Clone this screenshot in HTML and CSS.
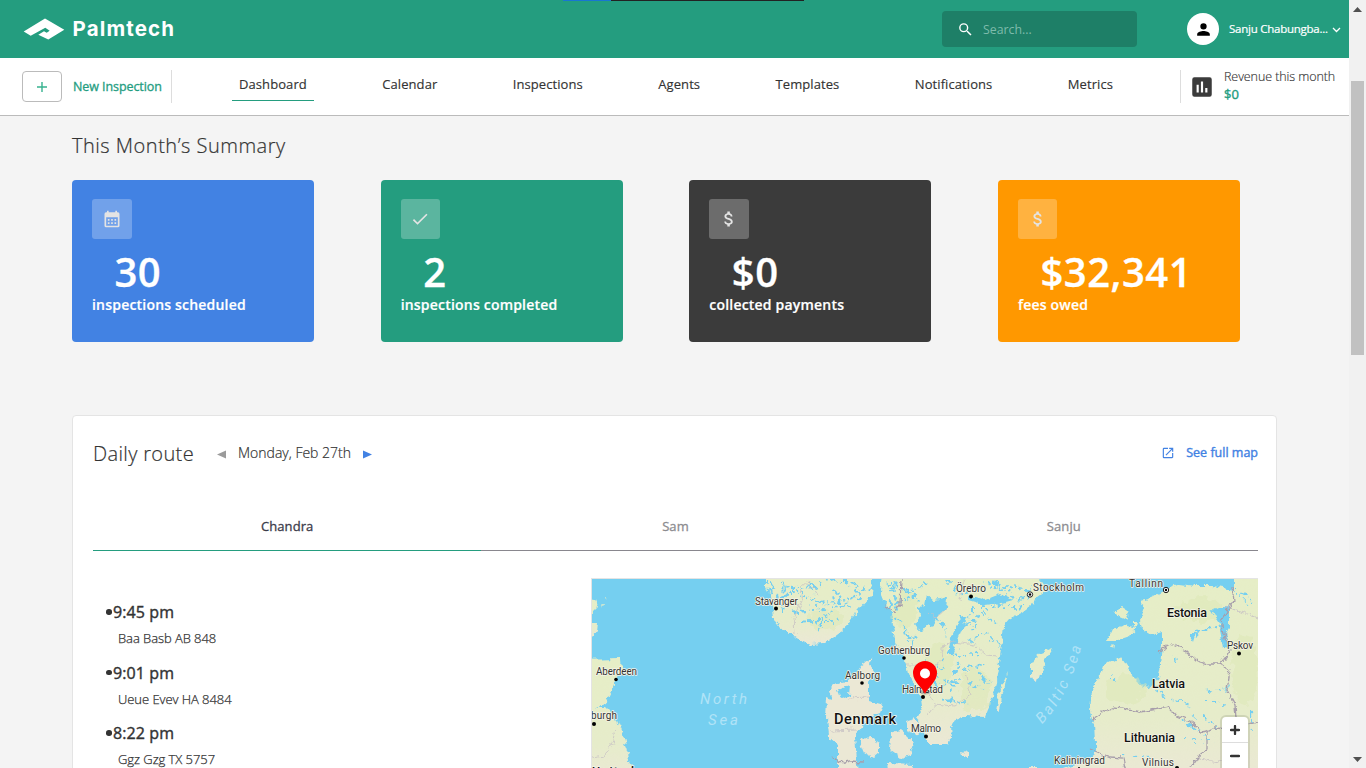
FILE: index.html
```html
<!DOCTYPE html>
<html lang="en">
<head>
<meta charset="utf-8">
<title>Palmtech Dashboard</title>
<link rel="stylesheet" href="styles.css">
</head>
<body>
<div class="window">
<div class="page">
  <header class="topbar">
    <div class="loader"></div>
    <svg class="logo-mark" width="42" height="23" viewBox="0 0 42 23"><path fill="#fff" d="M.7 13.500 22 .5 41.300 11.800 25.300 21.500 15.300 16.800 21 13.200 23.700 14.800 26.700 12.800 22.300 9.800 7.700 17.800Z"/></svg>
    <span class="brand">Palmtech</span>
    <div class="search">
      <svg width="17" height="17" viewBox="0 0 24 24"><path fill="#fff" d="M15.500 14h-.79l-.28-.27A6.470 6.470 0 0 0 16 9.500 6.500 6.500 0 1 0 9.500 16c1.610 0 3.090-.59 4.230-1.570l.27.28v.79l5 4.990L20.490 19zm-6 0a4.500 4.500 0 1 1 0-9 4.500 4.500 0 0 1 0 9"/></svg>
      <span>Search...</span>
    </div>
    <div class="avatar"><svg width="19" height="19" viewBox="0 0 24 24"><path d="M12 12a4 4 0 1 0 0-8 4 4 0 0 0 0 8m0 2c-2.670 0-8 1.340-8 4v2h16v-2c0-2.660-5.330-4-8-4"/></svg></div>
    <span class="user">Sanju Chabungba...</span>
    <svg class="chevron" width="9" height="6" viewBox="0 0 9 6"><path d="M1 1l3.500 3.500L8 1" fill="none" stroke="#fff" stroke-width="1.300"/></svg>
  </header>
  <nav class="nav">
    <div class="new-button"><svg width="10" height="10" viewBox="0 0 10 10"><path d="M5 0v10M0 5h10" stroke="#37b28f" stroke-width="1.400"/></svg></div>
    <span class="new-label">New Inspection</span>
    <div class="links">
      <a class="link active">Dashboard</a><a class="link">Calendar</a><a class="link">Inspections</a><a class="link">Agents</a><a class="link">Templates</a><a class="link">Notifications</a><a class="link">Metrics</a>
    </div>
    <div class="revenue">
      <svg width="26" height="26" viewBox="0 0 24 24"><path fill="#3b3b3b" d="M19 3H5a2 2 0 0 0-2 2v14a2 2 0 0 0 2 2h14a2 2 0 0 0 2-2V5a2 2 0 0 0-2-2M9 17H7v-7h2zm4 0h-2V7h2zm4 0h-2v-4h2z"/></svg>
      <div class="rev-text"><div class="rev-title">Revenue this month</div><div class="rev-value">$0</div></div>
    </div>
  </nav>
  <main class="content">
    <h1 class="title">This Month’s Summary</h1>
    <section class="cards">
      <article class="card blue">
        <div class="card-icon"><svg width="20" height="20" viewBox="0 0 24 24"><path fill="#e4e4e4" fill-rule="evenodd" d="M19 4h-1V2h-2v2H8V2H6v2H5a2 2 0 0 0-2 2v14a2 2 0 0 0 2 2h14a2 2 0 0 0 2-2V6a2 2 0 0 0-2-2m0 16H5V10h14zM7 12h2v2H7zm4 0h2v2h-2zm4 0h2v2h-2zM7 16h2v2H7zm4 0h2v2h-2zm4 0h2v2h-2z"/></svg></div>
        <div class="number">30</div><div class="label">inspections scheduled</div>
      </article>
      <article class="card green">
        <div class="card-icon"><svg width="20" height="20" viewBox="0 0 24 24"><path fill="#e4e4e4" d="M9 16.170 4.830 12l-1.420 1.410L9 19 21 7l-1.410-1.410z"/></svg></div>
        <div class="number">2</div><div class="label">inspections completed</div>
      </article>
      <article class="card dark">
        <div class="card-icon"><svg width="20" height="20" viewBox="0 0 24 24"><path fill="#e4e4e4" d="M11.800 10.900c-2.270-.59-3-1.200-3-2.150 0-1.090 1.010-1.850 2.700-1.850 1.780 0 2.440.85 2.500 2.100h2.210c-.07-1.720-1.120-3.300-3.210-3.810V3h-3v2.160c-1.940.42-3.500 1.680-3.500 3.610 0 2.310 1.910 3.460 4.700 4.130 2.500.6 3 1.480 3 2.410 0 .69-.49 1.790-2.700 1.790-2.060 0-2.870-.92-2.980-2.100h-2.200c.12 2.190 1.760 3.420 3.680 3.830V21h3v-2.150c1.950-.37 3.500-1.500 3.500-3.550 0-2.840-2.430-3.810-4.700-4.400"/></svg></div>
        <div class="number">$0</div><div class="label">collected payments</div>
      </article>
      <article class="card orange">
        <div class="card-icon"><svg width="20" height="20" viewBox="0 0 24 24"><path fill="#e4e4e4" d="M11.800 10.900c-2.270-.59-3-1.200-3-2.150 0-1.090 1.010-1.850 2.700-1.850 1.780 0 2.440.85 2.500 2.100h2.210c-.07-1.720-1.120-3.300-3.210-3.810V3h-3v2.160c-1.940.42-3.500 1.680-3.500 3.610 0 2.310 1.910 3.460 4.700 4.130 2.500.6 3 1.480 3 2.410 0 .69-.49 1.790-2.700 1.790-2.060 0-2.870-.92-2.980-2.100h-2.200c.12 2.190 1.760 3.420 3.680 3.830V21h3v-2.150c1.950-.37 3.500-1.500 3.500-3.550 0-2.840-2.430-3.810-4.700-4.400"/></svg></div>
        <div class="number">$32,341</div><div class="label">fees owed</div>
      </article>
    </section>
    <section class="panel">
      <div class="panel-head">
        <h2 class="panel-title">Daily route</h2>
        <svg class="prev" width="9" height="9" viewBox="0 0 9 9"><path d="M9 .5v8L0 4.500Z" fill="#9b9b9b"/></svg>
        <span class="date">Monday, Feb 27th</span>
        <svg width="9" height="9" viewBox="0 0 9 9"><path d="M0 .5v8L9 4.500Z" fill="#4282e3"/></svg>
        <a class="full-map"><svg width="14" height="14" viewBox="0 0 24 24"><path fill="#4282e3" d="M19 19H5V5h7V3H5a2 2 0 0 0-2 2v14a2 2 0 0 0 2 2h14c1.100 0 2-.9 2-2v-7h-2zM14 3v2h3.590l-9.830 9.830 1.410 1.410L19 6.410V10h2V3z"/></svg><span>See full map</span></a>
      </div>
      <div class="tabs"><div class="tab selected">Chandra</div><div class="tab">Sam</div><div class="tab">Sanju</div></div>
      <div class="route">
        <div class="stops">
          <div class="stop"><div class="time"><i class="dot"></i>9:45 pm</div><div class="address">Baa Basb AB 848</div></div>
          <div class="stop"><div class="time"><i class="dot"></i>9:01 pm</div><div class="address">Ueue Evev HA 8484</div></div>
          <div class="stop"><div class="time"><i class="dot"></i>8:22 pm</div><div class="address">Ggz Gzg TX 5757</div></div>
        </div>
        <div class="map">
          <svg width="666" height="189" viewBox="592 579 666 189">
            <defs>
              <filter id="coast" filterUnits="userSpaceOnUse" x="572" y="559" width="706" height="229"><feTurbulence type="fractalNoise" baseFrequency="0.16" numOctaves="3" seed="4"/><feDisplacementMap in="SourceGraphic" scale="7" xChannelSelector="R" yChannelSelector="G"/></filter>
              <filter id="rough" filterUnits="userSpaceOnUse" x="572" y="559" width="706" height="229"><feTurbulence type="fractalNoise" baseFrequency="0.14" numOctaves="2" seed="9"/><feDisplacementMap in="SourceGraphic" scale="14" xChannelSelector="R" yChannelSelector="G"/></filter>
              <linearGradient id="soil" x1="0" y1="0" x2="0" y2="1"><stop offset="0" stop-color="#e6eec6"/><stop offset=".7" stop-color="#e6ecca"/><stop offset="1" stop-color="#ebe8d5"/></linearGradient>
              <path id="baltic" d="M1042 724Q1070 696 1083 640"/>
            </defs>
            <rect x="580" y="570" width="690" height="210" fill="#75cff0"/>
            <g filter="url(#coast)" fill="url(#soil)">
              <path d="M766 565V587L771 600 773 610 774 620 780 628 790 634 800 640 810 644 825 643 840 632 848 625 858 610 872 595 874 565Z"/>
              <path d="M883 565 880 590 886 605 892 613 893 625 895 640 900 652 906 664 908 674 916 686 922 700 923 707 917 717 920 726 926 740 930 744 948 744 951 738 950 728 955 720 965 716 985 717 990 705 995 688 998 668 1001 650 1003 635 1004 625 1009 619 1022 612 1031 605 1037 597 1047 590 1040 580 1040 565Z"/>
              <path d="M1008 672 1004 690 998 713 995 711 999 690Z"/>
              <path d="M1031 665 1038 654 1053 648 1045 661 1041 677 1034 682 1031 676Z"/>
              <path fill="#ebe8d5" fill-rule="evenodd" d="M874 657 870 663 873 672 869 682 869 701 883 705 880 713 867 718 860 729 855 736 857 762 858 780H838L838 745 828 736 826 718 827 698 832 700 829 690 836 683 847 681 857 673 862 665ZM837 690 850 685 849 695 840 698Z"/>
              <path fill="#ebe8d5" d="M859 741 869 737 879 743 879 753 873 758 864 753ZM891 733 900 730 907 736 914 742 910 755 901 758 890 750ZM906 721 915 718 919 727 917 737 909 732ZM887 763 915 764 905 772 888 770ZM961 750 969 753 969 758 962 756Z"/>
              <path d="M580 660 621 659 622 669 616 680 612 690 606 703 596 708H606L616 718 624 738 628 755 634 780H580Z"/>
              <path d="M585 622 597 622 596 632 592 637 585 640ZM585 598 594 600 597 608 592 613 585 612ZM601 604 604 603 603 607ZM606 596 608 597 607 600Z"/>
              <path d="M1234 565V590L1212 586 1195 586 1180 584 1165 590 1152 597 1141 600 1144 608 1140 620 1144 630 1152 635 1162 632 1162 645 1160 665 1158 677 1150 688 1143 687 1134 678 1128 668 1121 657 1108 663 1103 665 1098 680 1092 690 1090 712 1094 724 1095 743 1095 754 1088 760 1060 770V780H1280V565Z"/>
              <path d="M1108 640 1113 629 1125 625 1137 628 1130 636 1115 641ZM1113 611 1122 607 1130 612 1125 619 1118 616ZM1133 622 1138 622 1137 627 1133 626ZM1112 646 1115 645 1114 649ZM580 765H604V768H580ZM1028 766H1037V772H1028Z"/>
            </g>
            <g fill="#dde8b4" opacity=".45" filter="url(#rough)"><ellipse cx="975" cy="690" rx="16" ry="22"/><ellipse cx="938" cy="665" rx="15" ry="22"/><ellipse cx="905" cy="610" rx="12" ry="20"/><ellipse cx="1200" cy="610" rx="24" ry="12"/><ellipse cx="1125" cy="690" rx="20" ry="14"/><ellipse cx="1245" cy="670" rx="13" ry="35"/><ellipse cx="825" cy="620" rx="18" ry="10"/></g>
            <g filter="url(#coast)" fill="#75cff0">
              <path d="M927 594 934 600 948 597 947 608 938 615 933 625 918 631 914 625 920 617 919 607 925 606ZM961 615 966 618 960 635 952 654 948 654 951 638ZM1211 611 1219 607 1229 607 1229 628 1225 634 1230 649 1224 648 1220 625ZM1190 632 1196 632 1193 642 1190 637ZM968 595 985 600 1000 594 1013 600 1002 603 985 605 968 600Z"/>
            </g>
            <g class="lakes" filter="url(#rough)">
              <path class="dense" d="M766 582 800 590 835 579 870 590M768 592 782 585 792 600M775 600 795 592 820 604 862 596M795 612 845 606M802 622 840 620M772 590 785 612M808 582 815 600M835 590 850 608M818 630 830 612M855 582 860 600"/>
              <path class="dense" d="M888 582 905 592 930 584M888 605 915 596M899 618 912 646M948 582 960 596 988 584 1030 590M938 618 946 632M966 624 985 614 1000 625M970 642 985 632 998 645M955 654 980 655M962 670 985 664M968 684 985 690M922 662 940 676 930 690M928 688 959 680M942 700 968 703M973 608 1022 606M905 634 918 640M893 588 898 612M912 588 918 606M995 585 1015 598 1030 598M975 630 970 615M958 664 952 692M978 674 990 684M945 660 938 672"/>
              <path d="M1156 690 1174 701 1192 705M1175 656 1176 660M1110 678 1114 680M1197 634 1216 627M1209 691 1230 687M1205 702 1228 706M1183 722 1205 736M1184 739 1215 741M1124 755 1149 757M1195 714 1220 728M1235 590 1254 605M1252 713 1254 735"/>
            </g>
            <g class="borders" filter="url(#coast)">
              <path d="M901 578 900 605 895 612 885 606M832 756 840 763 850 761 863 762M1159 651 1172 644 1185 650 1197 661 1207 664 1220 664 1225 658 1230 650 1224 635 1221 620 1235 600 1233 588M1220 664 1230 670 1227 690 1235 705 1236 718M1091 720 1105 711 1115 707 1140 712 1169 707 1175 715 1192 722 1200 732 1207 731 1215 727 1230 728 1258 721M1207 731 1207 750 1198 757 1190 768M1090 749 1110 757 1124 758 1126 768"/>
              <g class="minor"><path d="M795 635 794 618 803 600 800 588 808 581 817 595M592 758 604 756 613 743 616 730M906 664 920 664 933 670 941 658 944 644 955 642 975 645 986 655 998 656M928 688 934 704 955 706 972 694 965 675M935 704 928 715M945 610 935 618 928 612M848 698 869 697M830 731 857 730M1225 607 1244 612 1258 618M1198 759 1220 762M965 579 960 600"/></g>
            </g>
            <g class="points"><circle cx="776" cy="608.500" r="2"/><circle cx="616" cy="679.500" r="1.800"/><circle cx="594" cy="724" r="2"/><circle cx="904" cy="658" r="1.800"/><circle cx="862" cy="683" r="1.800"/><circle cx="971" cy="596.500" r="2"/><circle cx="923" cy="697" r="2"/><circle cx="926" cy="736.500" r="2"/><circle cx="1239" cy="653.500" r="2"/><circle cx="1177" cy="768" r="2"/><circle cx="1079" cy="768" r="1"/>
              <g class="capital"><circle cx="1030" cy="594.500" r="2.700"/><circle cx="1166" cy="590" r="2.700"/></g><circle cx="1030" cy="594.500" r="1.200"/><circle cx="1166" cy="590" r="1.200"/></g>
            <g class="towns">
              <text x="755" y="604.500" textLength="43">Stavanger</text><text x="596" y="675" textLength="41">Aberdeen</text><text x="591" y="719" textLength="26">burgh</text><text x="956" y="592" textLength="30">Örebro</text><text x="878" y="653.500" textLength="52">Gothenburg</text><text x="845" y="678.500" textLength="35">Aalborg</text><text x="902" y="692.500" textLength="41">Halmstad</text><text x="911" y="732" textLength="30">Malmo</text><text x="1033" y="591" textLength="51">Stockholm</text><text x="1129" y="586.500" textLength="34">Tallinn</text><text x="1227" y="649" textLength="26">Pskov</text><text x="1054" y="764" textLength="51">Kaliningrad</text><text x="1142" y="766" textLength="32">Vilnius</text>
            </g>
            <g class="countries"><text class="big" x="834" y="724" textLength="62">Denmark</text><text x="1167" y="617" textLength="40">Estonia</text><text x="1152" y="687.500" textLength="33">Latvia</text><text x="1124" y="742" textLength="51">Lithuania</text><text x="592" y="776" textLength="42">United</text></g>
            <g class="seas"><text x="700" y="704" textLength="47">North</text><text x="708" y="725" textLength="30">Sea</text><text><textPath href="#baltic" textLength="88">Baltic Sea</textPath></text></g>
            <ellipse cx="925" cy="692" rx="5" ry="2.500" fill="#000" opacity=".22"/>
            <path fill="#f00" d="M925 694c-2-6-12-12-12-21a12 12 0 0 1 24 0c0 9-10 15-12 21Z"/><circle cx="925" cy="673.500" r="5" fill="#fff"/>
          </svg>
          <div class="zoom"><b><svg width="10" height="10" viewBox="0 0 10 10"><path d="M5 1v8M1 5h8" stroke="#333" stroke-width="2.300" stroke-linecap="round"/></svg></b><b><svg width="10" height="10" viewBox="0 0 10 10"><path d="M1 5h8" stroke="#333" stroke-width="2.300" stroke-linecap="round"/></svg></b></div>
        </div>
      </div>
    </section>
  </main>
</div>
<aside class="scrollbar">
  <svg width="9" height="5" viewBox="0 0 9 5"><path d="M0 5 4.500 0 9 5Z" fill="#505050"/></svg>
  <div class="thumb"></div>
  <svg width="9" height="5" viewBox="0 0 9 5"><path d="M0 0H9L4.500 5Z" fill="#505050"/></svg>
</aside>
</div>
</body>
</html>
```

FILE: styles.css
```css
* { box-sizing: border-box; }
body { margin: 0; font-family: "Open Sans", sans-serif; color: #333; background: #f4f4f4; overflow: hidden; }
svg { display: block; flex: none; }
h1, h2 { margin: 0; font-weight: 300; }
.window { display: flex; width: 1366px; height: 768px; overflow: hidden; }
.page { width: 1349px; height: 768px; overflow: hidden; }
.topbar { position: relative; height: 58px; background: #249d7f; display: flex; align-items: center; padding-left: 23px; color: #fff; }
.loader { position: absolute; top: 0; left: 563px; width: 241px; height: 1px; background: linear-gradient(90deg, #1976d2 48px, #222 48px); }
.brand { font: 700 20.500px/26px Inter, sans-serif; letter-spacing: 1.150px; margin-left: 7.500px; width: 103.500px; white-space: nowrap; }
.search { margin-left: 766px; width: 195px; height: 36px; border-radius: 4px; background: #1e7f67; display: flex; align-items: center; gap: 9px; padding-left: 15px; font-size: 12.300px; color: #7dbbab; }
.avatar { margin-left: 50px; width: 32px; height: 32px; border-radius: 50%; background: #fff; display: grid; place-items: center; }
.user { margin: -1px 0 0 10px; width: 100px; font-size: 11.500px; letter-spacing: -.25px; -webkit-text-stroke: .2px; white-space: nowrap; }
.chevron { margin: 2px 0 0 3px; }
.nav { height: 58px; background: #fff; border-bottom: 1px solid #bbb; display: flex; align-items: center; padding-left: 22px; font-size: 13px; white-space: nowrap; }
.new-button { width: 40px; height: 31px; border: 1px solid #bbb; border-radius: 4px; display: grid; place-items: center; }
.new-label { margin-left: 11px; width: 99px; height: 33px; line-height: 33px; border-right: 1px solid #ddd; color: #249d7f; -webkit-text-stroke: .3px; font-size: 12.500px; letter-spacing: -.08px; }
.links { margin-left: 60px; width: 888px; display: flex; justify-content: space-between; }
.link { padding: 0 7px; height: 30px; line-height: 26px; border-bottom: 1px solid transparent; letter-spacing: .08px; margin-top: -1px; -webkit-text-stroke: .15px; }
.active { border-color: #249d7f; }
.revenue { margin-left: 60px; height: 33px; border-left: 1px solid #ddd; padding-left: 8px; display: flex; align-items: center; gap: 9px; }
.rev-text { margin-top: -3px; }
.rev-title { font-size: 12.500px; line-height: 17px; font-weight: 300; letter-spacing: -.08px; -webkit-text-stroke: .15px; }
.rev-value { color: #249d7f; -webkit-text-stroke: .4px; line-height: 18px; }
.content { padding: 16px 72px 0; }
.title { font-size: 20px; line-height: 28px; letter-spacing: .5px; -webkit-text-stroke: .2px; }
.cards { margin-top: 20px; width: 1168px; display: flex; justify-content: space-between; }
.card { width: 242px; height: 162px; border-radius: 4px; padding: 19px 20px; color: #fff; }
.blue { background: #4282e3; } .green { background: #249d7f; } .dark { background: #3b3b3b; } .orange { background: #ff9800; }
.card-icon { width: 39.500px; height: 40px; border-radius: 3px; background: rgba(255,255,255,.25); display: grid; place-items: center; }
.number { margin: 9px 0 0 22.500px; font-size: 40px; line-height: 48px; font-weight: 600; letter-spacing: .5px; -webkit-text-stroke: .3px; }
.label { font-size: 14px; line-height: 18px; font-weight: 600; white-space: nowrap; letter-spacing: .2px; -webkit-text-stroke: .2px; }
.panel { margin-top: 73px; width: 1205px; height: 400px; border: 1px solid #e4e4e4; border-radius: 4px; background: #fff; padding: 24px 18px 0 20px; }
.panel-head { display: flex; align-items: center; height: 28px; }
.panel-title { font-size: 20px; line-height: 28px; width: 124px; letter-spacing: .35px; -webkit-text-stroke: .2px; }
.date { font-size: 14px; font-weight: 300; width: 113px; margin: -3px 12px 0; white-space: nowrap; -webkit-text-stroke: .2px; }
.full-map { margin-left: auto; margin-top: -3px; display: flex; align-items: center; gap: 11px; font-size: 12.500px; -webkit-text-stroke: .4px; color: #4282e3; }
.tabs { margin-top: 35px; height: 48px; display: grid; grid-template-columns: repeat(3, 1fr); text-align: center; font-size: 13px; line-height: 46px; -webkit-text-stroke: .3px; letter-spacing: .1px; }
.tab { border-bottom: 1px solid #89878e; color: #8c8c90; }
.selected { border-color: #249d7f; color: #3b3b4a; }
.route { display: flex; margin-top: 27px; }
.stops { width: 498px; padding: 22px 0 0 13px; }
.stop { height: 60.500px; }
.time { display: flex; align-items: center; font-size: 16px; letter-spacing: .1px; -webkit-text-stroke: .4px; line-height: 24px; }
.dot { width: 5.500px; height: 5.500px; border-radius: 50%; background: #333; margin-right: 1.500px; }
.address { margin: 5px 0 0 12px; font-size: 13px; line-height: 18px; font-weight: 300; letter-spacing: -.06px; -webkit-text-stroke: .25px; }
.map { position: relative; width: 667px; height: 190px; border: 1px solid #e4e4e4; border-width: 1px 0 0 1px; overflow: hidden; }
.lakes { fill: none; stroke: #75cff0; stroke-width: 2.200; stroke-dasharray: 3 4 6 5 2 4; }
.dense { stroke-width: 2.800; stroke-dasharray: 3 3 5 4 2 3; }
.borders { fill: none; stroke: #a79eab; stroke-width: 1.300; }
.minor { stroke: #c8c1c4; stroke-width: .8; }
.towns, .countries { font-family: Roboto, sans-serif; paint-order: stroke; stroke: #f5f4e8; stroke-width: 1.500px; stroke-linejoin: round; }
.towns { font-size: 10px; fill: #333; }
.countries { font-size: 12.500px; font-weight: 500; fill: #111; }
.big { font-size: 14.500px; }
.seas { font: italic 15px Roboto, sans-serif; fill: #b0e3f7; }
.points { fill: #000; }
.capital { fill: #fff; stroke: #222; stroke-width: 1; }
.zoom { position: absolute; left: 630px; top: 138px; width: 26px; height: 54px; border-radius: 4px; background: #fff; box-shadow: 0 0 0 2px rgba(0,0,0,.1); }
.zoom b { display: grid; place-items: center; height: 26px; border-bottom: 1px solid #ddd; }
.scrollbar { width: 17px; height: 768px; background: #f1f1f1; display: flex; flex-direction: column; align-items: center; padding: 7px 0 6px; }
.thumb { width: 13px; height: 274px; margin: 69px 0 auto; background: #c1c1c1; }
```
